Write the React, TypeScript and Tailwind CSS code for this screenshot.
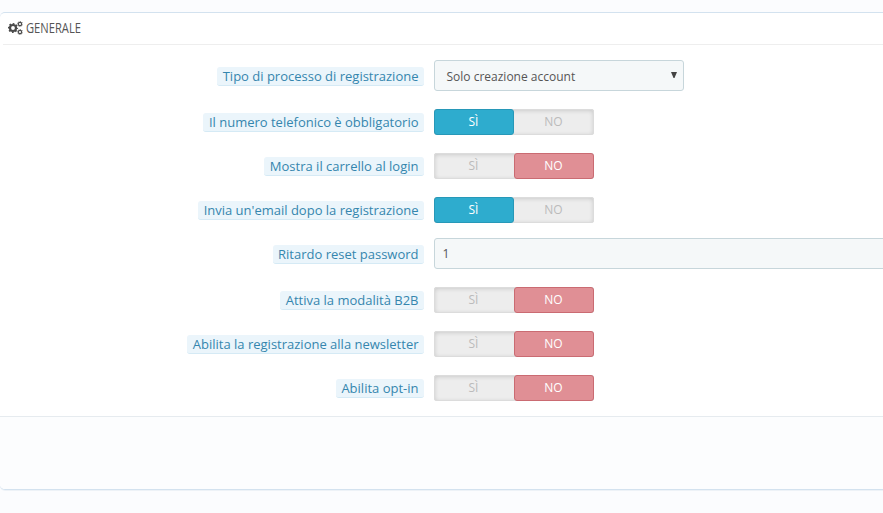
type Field =
  | { kind: "select" | "text"; label: string; value: string }
  | { kind: "switch"; label: string; on: boolean };

const fields: Field[] = [
  { kind: "select", label: "Tipo di processo di registrazione", value: "Solo creazione account" },
  { kind: "switch", label: "Il numero telefonico è obbligatorio", on: true },
  { kind: "switch", label: "Mostra il carrello al login", on: false },
  { kind: "switch", label: "Invia un'email dopo la registrazione", on: true },
  { kind: "text", label: "Ritardo reset password", value: "1" },
  { kind: "switch", label: "Attiva la modalità B2B", on: false },
  { kind: "switch", label: "Abilita la registrazione alla newsletter", on: false },
  { kind: "switch", label: "Abilita opt-in", on: false },
];

function Cogs() {
  return (
    <svg className="mb-px h-[14px] w-[15px]" viewBox="0 0 15 14" fill="none" stroke="#4a4a4a">
      <circle cx="5" cy="7" r="3" strokeWidth="2.2" />
      <circle cx="5" cy="7" r="4.4" strokeWidth="1.4" strokeDasharray="1.728" strokeDashoffset="0.864" />
      <circle cx="12" cy="3" r="1.65" strokeWidth="1.1" />
      <circle cx="12" cy="3" r="2.5" strokeWidth="0.9" strokeDasharray="0.982" strokeDashoffset="0.491" />
      <circle cx="12" cy="11" r="1.65" strokeWidth="1.1" />
      <circle cx="12" cy="11" r="2.5" strokeWidth="0.9" strokeDasharray="0.982" strokeDashoffset="0.491" />
    </svg>
  );
}

function Switch({ on }: { on: boolean }) {
  return (
    <div className="flex h-[26px] w-40 rounded-[3px] bg-[#ededed] text-center text-xs leading-6 text-[#bbb] shadow-[inset_0_0_0_1px_#dcdcdc,inset_0_1px_5px_rgba(0,0,0,0.2)]">
      <span className={on ? "w-20 rounded-[3px] border border-[#2798b8] bg-[#2eacce] pr-px text-white" : "w-20 border border-transparent pr-px"}>SÌ</span>
      <span className={on ? "w-20 border border-transparent pr-px" : "w-20 rounded-[3px] border border-[#ca6b72] bg-[#e08f95] pr-px text-white"}>NO</span>
    </div>
  );
}

function Row({ field }: { field: Field }) {
  const isSwitch = field.kind === "switch";
  return (
    <div className={field.kind === "text" ? "-mt-[3px] flex gap-[10px]" : "flex gap-[10px]"}>
      <div className={isSwitch ? "flex w-[424px] shrink-0 justify-end pt-1" : "flex w-[424px] shrink-0 justify-end pt-[7px]"}>
        <label className="h-[19px] whitespace-nowrap rounded-[3px] border-b border-[#d5eaf5] bg-[#ebf5fb] pr-[5.5px] pl-[5.5px] text-[13px] leading-[18px] text-[#3586ae]">
          {field.label}
        </label>
      </div>
      {field.kind === "switch" && <Switch on={field.on} />}
      {field.kind === "select" && (
        <button className="flex h-[31px] w-[250px] items-center justify-between rounded-[3px] border border-[#c7d6db] bg-[#f5f8f9] pr-[6px] pl-[11.5px] text-xs text-[#555]">
          <span className="pt-[3px]">{field.value}</span>
          <svg className="mb-[2px] h-[6px] w-[6px]" viewBox="0 0 6 6" fill="#444">
            <path d="M0 0h6L3.5 6h-1z" />
          </svg>
        </button>
      )}
      {field.kind === "text" && (
        <input
          className="h-[31px] w-[600px] shrink-0 rounded-[3px] border border-[#c7d6db] bg-[#f5f8f9] px-[7.5px] text-xs text-[#555] outline-none"
          defaultValue={field.value}
        />
      )}
    </div>
  );
}

export default function App() {
  return (
    <div className="h-[513px] w-[883px] overflow-hidden bg-[#fbfcfe] pt-3 font-['Open_Sans','Noto_Sans',sans-serif]">
      <section className="h-[478px] rounded-tl-[5px] rounded-bl-[5px] border-t border-b border-[#d3e2ef] bg-white shadow-[0_1px_0_#edf2f7]">
        <h3 className="ml-[3px] flex h-8 items-center border-b border-[#eee] pl-[5px] text-[#555]">
          <Cogs />
          <span className="mb-1 ml-[3px] w-14 origin-left scale-x-[0.755] whitespace-nowrap text-[14.8px] leading-5">GENERALE</span>
        </h3>
        <div className="flex h-[371px] flex-col gap-[18px] pt-[15px]">
          {fields.map((field) => (
            <Row key={field.label} field={field} />
          ))}
        </div>
        <footer className="h-[73px] rounded-bl-[5px] border-t border-[#e6ebef] bg-[#fcfdfe]" />
      </section>
    </div>
  );
}
